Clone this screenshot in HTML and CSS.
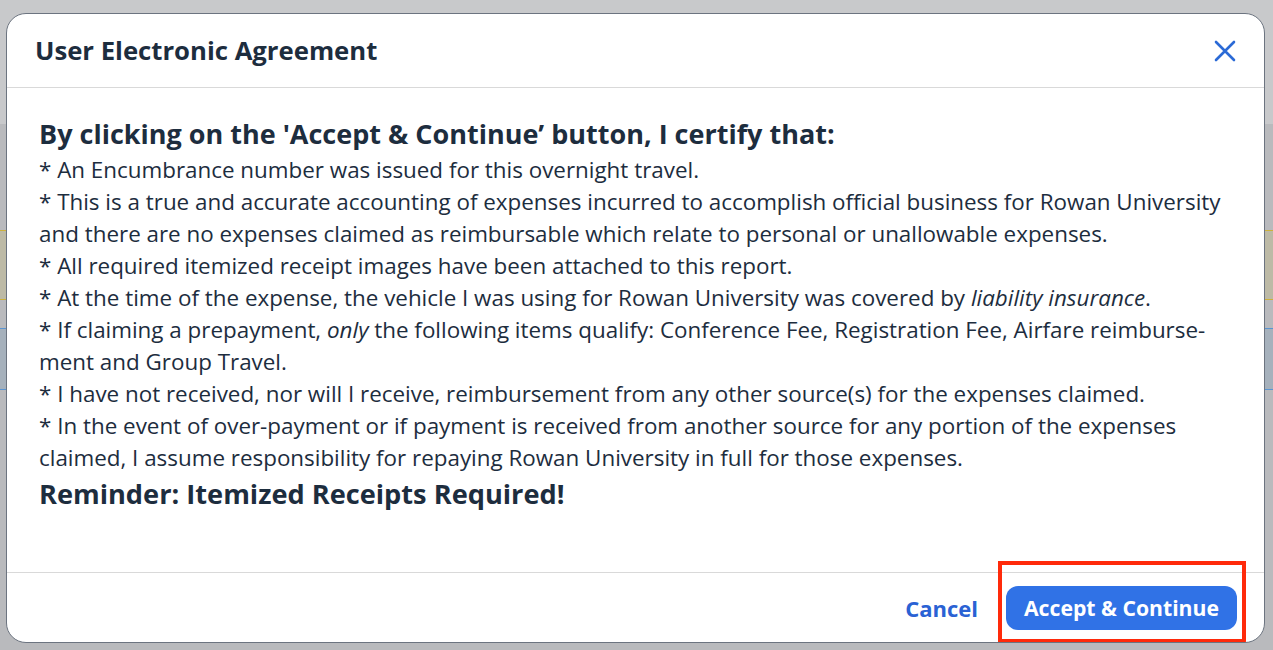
FILE: index.html
```html
<!DOCTYPE html>
<html>
<head>
    <meta charset="utf-8" />
    <title>User Electronic Agreement</title>
    <link rel="stylesheet" href="styles.css">
</head>
<body class="body">
    <div class="backdrop">
        <div class="bdTop"></div>
        <div class="bdGap"></div>
        <div class="bdWarn"></div>
        <div class="bdGap2"></div>
        <div class="bdInfo"></div>
    </div>

    <div class="dialog">
        <div class="dialogHeader">
            <h2 class="dialogTitle">User Electronic Agreement</h2>
            <button class="closeBtn" aria-label="Close">
                <svg width="22" height="22" viewBox="0 0 22 22">
                    <path d="M2 2 L20 20 M20 2 L2 20" stroke="#2b6ad6" stroke-width="2.6" stroke-linecap="round" fill="none" />
                </svg>
            </button>
        </div>

        <div class="dialogBody">
            <h3 class="certify">By clicking on the 'Accept &amp; Continue’ button, I certify that:</h3>
            <p class="line">* An Encumbrance number was issued for this overnight travel.</p>
            <p class="line">* This is a true and accurate accounting of expenses incurred to accomplish official business for Rowan University and there are no expenses claimed as reimbursable which relate to personal or unallowable expenses.</p>
            <p class="line">* All required itemized receipt images have been attached to this report.</p>
            <p class="line">* At the time of the expense, the vehicle I was using for Rowan University was covered by <i>liability insurance</i>.</p>
            <p class="line">* If claiming a prepayment, <i>only</i> the following items qualify: Conference Fee, Registration Fee, Airfare reimburse&shy;ment and Group Travel.</p>
            <p class="line">* I have not received, nor will I receive, reimbursement from any other source(s) for the expenses claimed.</p>
            <p class="line">* In the event of over-payment or if payment is received from another source for any portion of the expenses claimed, I assume responsibility for repaying Rowan University in full for those expenses.</p>
            <h3 class="reminder">Reminder: Itemized Receipts Required!</h3>
        </div>

        <div class="dialogFooter">
            <button class="linkBtn">Cancel</button>
            <div class="acceptWrap">
                <button class="primaryBtn">Accept &amp; Continue</button>
                <span class="highlight"></span>
            </div>
        </div>
    </div>
</body>
</html>
```

FILE: styles.css
```css
.body {
    margin: 0;
    background-color: #b9babd;
    font-family: "Open Sans", "Noto Sans", sans-serif;
    color: #1d2d3e;
    overflow: hidden;
}

/* page behind the dialog, only its edges show */
.backdrop {
    height: 650px;
}
.bdTop {
    height: 124px;
    background-color: #c8c9cb;
}
.bdGap {
    height: 106px;
}
.bdWarn {
    height: 68px;
    background-color: #bdbaa6;
    border-top: 1px solid #cdb13c;
    border-bottom: 1px solid #cdb13c;
}
.bdGap2 {
    height: 28px;
}
.bdInfo {
    height: 60px;
    background-color: #a6b1bc;
    border-top: 1px solid #5b95d2;
    border-bottom: 1px solid #5b95d2;
}

.dialog {
    position: absolute;
    left: 6px;
    top: 13px;
    width: 1257px;
    height: 628px;
    background-color: white;
    border: 1.5px solid #6c7480;
    border-radius: 20px;
    display: flex;
    flex-direction: column;
    overflow: hidden;
}

.dialogHeader {
    height: 73px;
    display: flex;
    align-items: center;
    justify-content: space-between;
    padding: 0 28px 0 28px;
    border-bottom: 1.5px solid #d9d9d9;
}
.dialogTitle {
    margin: 0;
    font-size: 25.7px;
    font-weight: bold;
    color: #1d2d3e;
}
.closeBtn {
    border: none;
    background: none;
    padding: 0;
    margin-right: -2px;
    width: 26px;
    height: 26px;
    display: flex;
    align-items: center;
    justify-content: center;
}

.dialogBody {
    flex: 1;
    padding: 26px 32px 0 32px;
}
.certify {
    margin: 0;
    font-size: 27px;
    line-height: 40px;
    font-weight: bold;
}
.line {
    margin: 0;
    font-size: 22.4px;
    line-height: 32px;
    hyphens: manual;
}
.reminder {
    margin: 0;
    font-size: 27.2px;
    line-height: 40px;
    font-weight: bold;
}

.dialogFooter {
    height: 69px;
    border-top: 1.5px solid #d9d9d9;
    display: flex;
    align-items: center;
    justify-content: flex-end;
    gap: 12px;
    padding: 0 27px 0 0;
}
.linkBtn {
    border: none;
    background: none;
    font-family: "Open Sans", "Noto Sans", sans-serif;
    font-size: 22px;
    font-weight: bold;
    color: #2a62d4;
    padding: 0 16px;
    height: 44px;
}
.acceptWrap {
    position: relative;
}
.primaryBtn {
    border: none;
    height: 44px;
    width: 231px;
    border-radius: 12px;
    background-color: #3072e6;
    color: white;
    font-family: "Open Sans", "Noto Sans", sans-serif;
    font-size: 21.2px;
    font-weight: bold;
    display: block;
}
.highlight {
    position: absolute;
    top: -25px;
    left: -8px;
    right: -9px;
    bottom: -13px;
    border: 4px solid #ff2a0a;
}
```
